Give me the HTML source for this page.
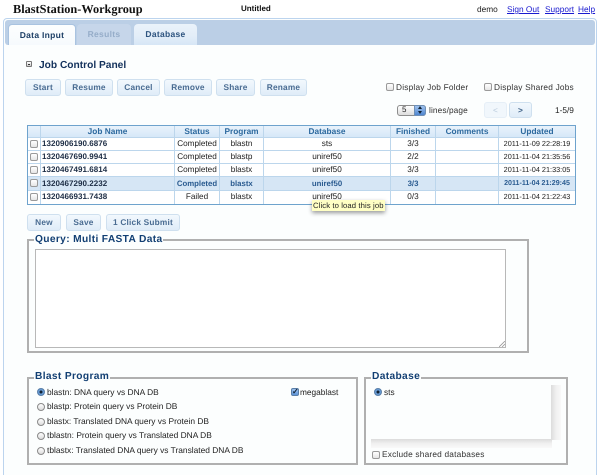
<!DOCTYPE html>
<html><head><meta charset="utf-8"><style>
html,body{margin:0;padding:0;background:#fff}
#p{position:relative;width:600px;height:475px;overflow:hidden;font-family:"Liberation Sans",sans-serif;font-size:8.3px;color:#222;background:#fff;text-rendering:geometricPrecision;filter:blur(.3px)}
#p div,#p span.a{position:absolute;box-sizing:border-box;white-space:nowrap}
.t{line-height:12px}
.tab{top:24px;height:21px;border-radius:4px 4px 0 0;text-align:center;line-height:21px;font-weight:bold;font-size:8.5px;letter-spacing:.3px;color:#1d3f66}
.b{height:17px;border:1px solid #cfe0ef;border-radius:3px;background:linear-gradient(#f2f8fd,#dfecf8);text-align:center;line-height:15px;font-weight:bold;font-size:8.3px;letter-spacing:.2px;color:#4a6c92}
.cb{width:8px;height:8px;border:1px solid #9a9a9a;border-radius:2px;background:linear-gradient(#fff,#e6e6e6)}
.r{width:8px;height:8px;border:1px solid #8a8a8a;border-radius:50%;background:linear-gradient(#fff,#dcdcdc)}
.r.on{background:radial-gradient(circle,#123 0 1.3px,#6fa3dc 1.8px,#4f86c6);border-color:#5a7fa8}
.cell{text-align:center;line-height:13px;font-size:8.2px}
.id{font-weight:bold;color:#1c2c44;font-size:8px;letter-spacing:.05px}
.h{font-weight:bold;color:#2d6a9f;top:126px;height:11px;line-height:11px;text-align:center;font-size:8.3px}
.fs{border:2px solid #b0b0b0}
.lg{background:#fcfefe;color:#123f73;font-weight:bold;font-size:10.2px;line-height:12px;letter-spacing:.35px;padding:0 1px}
.rowt{left:47px;line-height:12px;font-size:8.4px}
</style></head><body><div id="p">

<div class="t" style="left:13px;top:2px;font:bold 12.3px/14px 'Liberation Serif',serif;color:#111">BlastStation-Workgroup</div>
<div class="t" style="left:241px;top:3px;font-weight:bold;font-size:8px;color:#111">Untitled</div>
<div class="t" style="left:477px;top:3px;font-size:8.3px">demo</div>
<div class="t" style="left:507px;top:3px;font-size:8.3px;color:#1a1ad0;text-decoration:underline">Sign Out</div>
<div class="t" style="left:545px;top:3px;font-size:8.3px;color:#1a1ad0;text-decoration:underline">Support</div>
<div class="t" style="left:578px;top:3px;font-size:8.3px;color:#1a1ad0;text-decoration:underline">Help</div>

<div style="left:3px;top:18px;width:594px;height:470px;border:1px solid #bcd4ee;border-radius:4px 4px 0 0;background:#fcfefe"></div>
<div style="left:5px;top:20px;width:590px;height:25px;background:#bbcfe6;border-radius:3px"></div>

<div class="tab" style="left:8px;width:68px;background:linear-gradient(#fdfefe,#f6fafd);border:1px solid #a9c3e0;border-bottom:0;line-height:20px">Data Input</div>
<div class="tab" style="left:77px;width:54px;background:#c6d6ea;color:#96adc9">Results</div>
<div class="tab" style="left:134px;width:63px;background:linear-gradient(#eaf2fa,#e2edf8 60%,#d6e6f6);color:#2f5580">Database</div>

<div style="left:26px;top:61px;width:6px;height:6px;border:1px solid #777;border-radius:1px;background:linear-gradient(#fff,#ccc)"><div style="left:1px;top:1.5px;width:2px;height:1px;background:#333"></div></div>
<div class="t" style="left:39px;top:59px;font-weight:bold;font-size:10.2px;line-height:13px;color:#14325c">Job Control Panel</div>

<div class="b" style="left:25px;top:79px;width:36px">Start</div>
<div class="b" style="left:65px;top:79px;width:48px">Resume</div>
<div class="b" style="left:117px;top:79px;width:43px">Cancel</div>
<div class="b" style="left:164px;top:79px;width:48px">Remove</div>
<div class="b" style="left:216px;top:79px;width:39px">Share</div>
<div class="b" style="left:260px;top:79px;width:47px">Rename</div>

<div class="cb" style="left:386px;top:83px"></div>
<div class="t" style="left:396px;top:81px;letter-spacing:.2px;color:#333">Display Job Folder</div>
<div class="cb" style="left:484px;top:83px"></div>
<div class="t" style="left:494px;top:81px;letter-spacing:.2px;color:#333">Display Shared Jobs</div>

<div style="left:397px;top:105px;width:29px;height:11px;border:1px solid #8d8d8d;border-radius:3px;background:linear-gradient(#fff,#ddd)"></div>
<div style="left:414px;top:105px;width:12px;height:11px;border-radius:0 3px 3px 0;background:linear-gradient(#9fc2ee,#4f86d0);border:1px solid #6f8fb5"></div>
<div style="left:418px;top:106px;width:0;height:0;border:2px solid transparent;border-bottom:3px solid #123;border-top:0"></div>
<div style="left:418px;top:111px;width:0;height:0;border:2px solid transparent;border-top:3px solid #123;border-bottom:0"></div>
<div class="t" style="left:402px;top:104px;font-size:8px">5</div>
<div class="t" style="left:429px;top:104px;color:#333;letter-spacing:.1px">lines/page</div>
<div class="b" style="left:484px;top:102px;width:23px;height:16px;background:#f1f7fc;border-color:#e6eff7;color:#bcd;font-weight:normal">&lt;</div>
<div class="b" style="left:509px;top:102px;width:23px;height:16px;color:#3f6288">&gt;</div>
<div class="t" style="left:555px;top:104px">1-5/9</div>

<!-- table -->
<div style="left:27px;top:125px;width:549px;height:80px;border:1px solid #6ea3cd;background:#fff"></div>
<div style="left:28px;top:126px;width:547px;height:11px;background:linear-gradient(#e9f2fb,#d6e7f8)"></div>
<div style="left:28px;top:176px;width:547px;height:14px;background:#d6e6f5"></div>
<div style="left:28px;top:137px;width:547px;height:1px;background:#bcd6ec"></div>
<div style="left:28px;top:150px;width:547px;height:1px;background:#bcd6ec"></div>
<div style="left:28px;top:163px;width:547px;height:1px;background:#bcd6ec"></div>
<div style="left:28px;top:176px;width:547px;height:1px;background:#bcd6ec"></div>
<div style="left:28px;top:190px;width:547px;height:1px;background:#bcd6ec"></div>
<div style="left:40px;top:126px;width:1px;height:78px;background:#bcd6ec"></div>
<div style="left:174px;top:126px;width:1px;height:78px;background:#bcd6ec"></div>
<div style="left:219px;top:126px;width:1px;height:78px;background:#bcd6ec"></div>
<div style="left:263px;top:126px;width:1px;height:78px;background:#bcd6ec"></div>
<div style="left:390px;top:126px;width:1px;height:78px;background:#bcd6ec"></div>
<div style="left:435px;top:126px;width:1px;height:78px;background:#bcd6ec"></div>
<div style="left:498px;top:126px;width:1px;height:78px;background:#bcd6ec"></div>

<div class="h" style="left:41px;width:133px">Job Name</div>
<div class="h" style="left:175px;width:44px">Status</div>
<div class="h" style="left:220px;width:43px">Program</div>
<div class="h" style="left:264px;width:126px">Database</div>
<div class="h" style="left:391px;width:44px">Finished</div>
<div class="h" style="left:436px;width:62px">Comments</div>
<div class="h" style="left:499px;width:76px">Updated</div>

<div class="cb" style="left:30px;top:140px"></div>
<div class="cell id" style="left:42px;top:137px">1320906190.6876</div>
<div class="cell" style="left:175px;top:137px;width:44px">Completed</div>
<div class="cell" style="left:220px;top:137px;width:43px">blastn</div>
<div class="cell" style="left:264px;top:137px;width:126px">sts</div>
<div class="cell" style="left:391px;top:137px;width:44px">3/3</div>
<div class="cell" style="left:499px;top:137px;width:76px;font-size:7.3px">2011-11-09 22:28:19</div>

<div class="cb" style="left:30px;top:153px"></div>
<div class="cell id" style="left:42px;top:150px">1320467690.9941</div>
<div class="cell" style="left:175px;top:150px;width:44px">Completed</div>
<div class="cell" style="left:220px;top:150px;width:43px">blastp</div>
<div class="cell" style="left:264px;top:150px;width:126px">uniref50</div>
<div class="cell" style="left:391px;top:150px;width:44px">2/2</div>
<div class="cell" style="left:499px;top:150px;width:76px;font-size:7.3px">2011-11-04 21:35:56</div>

<div class="cb" style="left:30px;top:166px"></div>
<div class="cell id" style="left:42px;top:163px">1320467491.6814</div>
<div class="cell" style="left:175px;top:163px;width:44px">Completed</div>
<div class="cell" style="left:220px;top:163px;width:43px">blastx</div>
<div class="cell" style="left:264px;top:163px;width:126px">uniref50</div>
<div class="cell" style="left:391px;top:163px;width:44px">3/3</div>
<div class="cell" style="left:499px;top:163px;width:76px;font-size:7.3px">2011-11-04 21:33:05</div>

<div class="cb" style="left:30px;top:179px"></div>
<div class="cell id" style="left:42px;top:177px">1320467290.2232</div>
<div class="cell" style="left:175px;top:177px;width:44px;font-weight:bold;font-size:7.8px;color:#2a5b90">Completed</div>
<div class="cell" style="left:220px;top:177px;width:43px;font-weight:bold;font-size:7.8px;color:#2a5b90">blastx</div>
<div class="cell" style="left:264px;top:177px;width:126px;font-weight:bold;font-size:7.8px;color:#2a5b90">uniref50</div>
<div class="cell" style="left:391px;top:177px;width:44px;font-weight:bold;font-size:7.8px;color:#2a5b90">3/3</div>
<div class="cell" style="left:499px;top:177px;width:76px;font-size:7.1px;font-weight:bold;color:#2a5b90">2011-11-04 21:29:45</div>

<div class="cb" style="left:30px;top:193px"></div>
<div class="cell id" style="left:42px;top:190px">1320466931.7438</div>
<div class="cell" style="left:175px;top:190px;width:44px">Failed</div>
<div class="cell" style="left:220px;top:190px;width:43px">blastx</div>
<div class="cell" style="left:264px;top:190px;width:126px">uniref50</div>
<div class="cell" style="left:391px;top:190px;width:44px">0/3</div>
<div class="cell" style="left:499px;top:190px;width:76px;font-size:7.3px">2011-11-04 21:22:43</div>

<div style="left:312px;top:200px;width:73px;height:11px;background:#ffffc4;box-shadow:0 2px 4px rgba(0,0,0,.4);font-size:7.7px;line-height:11px;padding-left:1px;letter-spacing:.1px;color:#222">Click to load this job</div>

<div class="b" style="left:27px;top:214px;width:34px">New</div>
<div class="b" style="left:66px;top:214px;width:35px">Save</div>
<div class="b" style="left:106px;top:214px;width:74px">1 Click Submit</div>

<!-- query -->
<div class="fs" style="left:27px;top:239px;width:502px;height:114px"></div>
<div class="lg" style="left:34px;top:234px">Query: Multi FASTA Data</div>
<div style="left:35px;top:249px;width:471px;height:99px;border:1px solid #b8b8b8;background:#fff"></div>
<svg style="position:absolute;left:499px;top:341px" width="6" height="6"><path d="M0 6L6 0M3 6L6 3" stroke="#999" stroke-width=".8"/></svg>

<!-- blast program -->
<div class="fs" style="left:27px;top:377px;width:331px;height:88px"></div>
<div class="lg" style="left:34px;top:371px">Blast Program</div>
<div class="r on" style="left:37px;top:388px"></div>
<div class="t rowt" style="top:386px">blastn: DNA query vs DNA DB</div>
<div class="r" style="left:37px;top:403px"></div>
<div class="t rowt" style="top:400px">blastp: Protein query vs Protein DB</div>
<div class="r" style="left:37px;top:418px"></div>
<div class="t rowt" style="top:415px">blastx: Translated DNA query vs Protein DB</div>
<div class="r" style="left:37px;top:432px"></div>
<div class="t rowt" style="top:429px">tblastn: Protein query vs Translated DNA DB</div>
<div class="r" style="left:37px;top:447px"></div>
<div class="t rowt" style="top:444px">tblastx: Translated DNA query vs Translated DNA DB</div>
<div style="left:291px;top:388px;width:8px;height:8px;border-radius:2px;border:1px solid #5a7fa8;background:linear-gradient(#9fc2ee,#5d93d8);color:#123;font-size:8px;line-height:6px;font-weight:bold;text-align:center">✓</div>
<div class="t" style="left:300px;top:386px">megablast</div>

<!-- database -->
<div class="fs" style="left:364px;top:377px;width:204px;height:88px"></div>
<div class="lg" style="left:371px;top:371px">Database</div>
<div class="r on" style="left:374px;top:388px"></div>
<div class="t" style="left:384px;top:386px">sts</div>
<div style="left:551px;top:385px;width:10px;height:55px;background:linear-gradient(90deg,#dcdcdc,#f0f0f0 50%,#f9f9f9)"></div>
<div style="left:371px;top:439px;width:181px;height:9px;background:linear-gradient(#dcdcdc,#f0f0f0 50%,#f9f9f9)"></div>
<div class="cb" style="left:372px;top:451px"></div>
<div class="t" style="left:382px;top:448px;letter-spacing:.2px;color:#333">Exclude shared databases</div>

</div></body></html>
